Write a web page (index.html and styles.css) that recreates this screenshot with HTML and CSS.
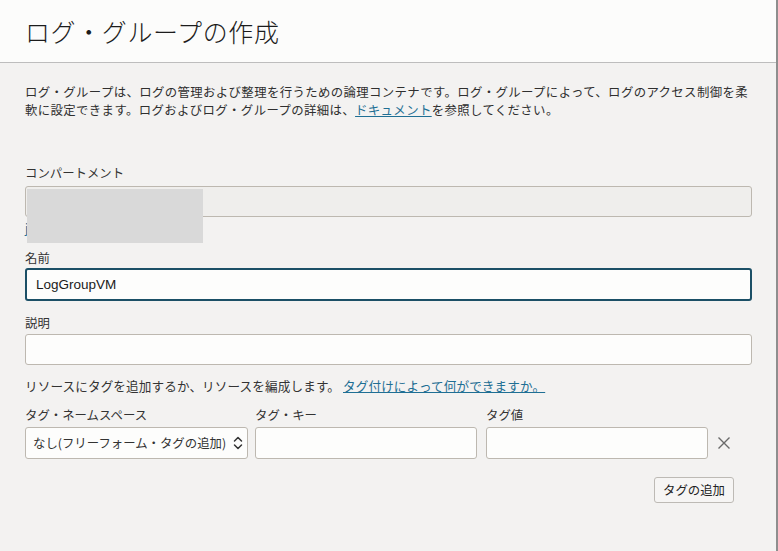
FILE: index.html
```html
<!DOCTYPE html>
<html lang="ja">
<head>
<meta charset="utf-8">
<link rel="stylesheet" href="styles.css">
</head>
<body>
<div class="page">
  <header class="header">
    <h1 class="title">ログ・グループの作成</h1>
  </header>
  <main class="content">
    <p class="intro">ログ・グループは、ログの管理および整理を行うための論理コンテナです。ログ・グループによって、ログのアクセス制御を柔軟に設定できます。ログおよびログ・グループの詳細は、<a class="link" href="#">ドキュメント</a>を参照してください。</p>

    <div class="field compartment">
      <label class="label">コンパートメント</label>
      <div class="select-box disabled"></div>
      <a class="sublink" href="#">j</a>
      <div class="redact"></div>
    </div>

    <div class="field name-field">
      <label class="label">名前</label>
      <div class="input focused">LogGroupVM</div>
    </div>

    <div class="field desc-field">
      <label class="label">説明</label>
      <div class="input"></div>
    </div>

    <p class="help">リソースにタグを追加するか、リソースを編成します。 <a class="link" href="#">タグ付けによって何ができますか。</a></p>

    <div class="tags">
      <div class="tag-col ns">
        <label class="label">タグ・ネームスペース</label>
        <div class="input select">
          <span>なし(フリーフォーム・タグの追加)</span>
          <svg class="chev" width="10" height="16" viewBox="0 0 10 16"><path d="M1.5 6 L5 2.5 L8.5 6 M1.5 10 L5 13.5 L8.5 10" fill="none" stroke="#333" stroke-width="1.5" stroke-linecap="round" stroke-linejoin="round"/></svg>
        </div>
      </div>
      <div class="tag-col key">
        <label class="label">タグ・キー</label>
        <div class="input"></div>
      </div>
      <div class="tag-col val">
        <label class="label">タグ値</label>
        <div class="input"></div>
      </div>
      <div class="remove">
        <svg width="14" height="14" viewBox="0 0 14 14"><path d="M1.5 1.5 L12.5 12.5 M12.5 1.5 L1.5 12.5" stroke="#6a6a6a" stroke-width="1.4" fill="none"/></svg>
      </div>
    </div>

    <div class="actions">
      <button class="btn">タグの追加</button>
    </div>
  </main>
</div>
</body>
</html>
```
FILE: styles.css
```css
* { box-sizing: border-box; }
html, body { margin: 0; padding: 0; }
body {
  background: #f3f2f1;
  font-family: "Noto Sans CJK JP", "Liberation Sans", sans-serif;
  color: #2e2e2e;
}
.page {
  width: 778px;
  height: 551px;
  border-right: 2px solid #8e8e8e;
  background: #f3f2f1;
}
.header {
  height: 63px;
  background: #fcfcfb;
  border-bottom: 1px solid #bdbdbd;
  display: flex;
  align-items: center;
  padding-left: 25px;
}
.title {
  margin: 0;
  font-size: 25px;
  font-weight: 300;
  color: #1c1c1c;
  line-height: 30px;
  letter-spacing: 0.6px;
}
.content {
  padding: 20px 24px 0 25px;
}
.intro {
  margin: 0;
  font-size: 12.4px;
  line-height: 18px;
  color: #2f2f2f;
  letter-spacing: 0.38px;
}
.link {
  color: #1f6f94;
  text-decoration: underline;
}
.label {
  display: block;
  font-size: 12.4px;
  line-height: 16px;
  color: #333;
}
.field { position: relative; }
.compartment { margin-top: 46px; }
.compartment .label { margin-bottom: 5px; }
.select-box {
  height: 31px;
  border: 1px solid #bdb8b0;
  border-radius: 3px;
  background: #efeeec;
}
.sublink {
  display: block;
  font-size: 12.4px;
  line-height: 16px;
  color: #1f6f94;
  margin-top: 3px;
  text-decoration: none;
}
.redact {
  position: absolute;
  left: 2px;
  top: 24px;
  width: 176px;
  height: 54px;
  background: #d9d9d9;
}
.name-field { margin-top: 14px; }
.name-field .label { margin-bottom: 2px; }
.input {
  height: 31px;
  border: 1px solid #bdb8b0;
  border-radius: 3px;
  background: #fdfdfc;
}
.input.focused {
  height: 33px;
  border: 2px solid #1b4f66;
  font-family: "Liberation Sans", Arial, sans-serif;
  font-size: 13.5px;
  color: #1a1a1a;
  display: flex;
  align-items: center;
  padding-left: 9px;
}
.desc-field { margin-top: 14px; }
.desc-field .label { margin-bottom: 3px; }
.help {
  margin: 13px 0 0;
  font-size: 12.6px;
  line-height: 16px;
  color: #333;
  letter-spacing: 0.12px;
}
.tags {
  display: flex;
  align-items: flex-end;
  margin-top: 13px;
}
.tag-col .label { margin-bottom: 4px; }
.tag-col .input { height: 32px; }
.ns { width: 223px; }
.key { width: 222px; margin-left: 7px; }
.val { width: 222px; margin-left: 9px; }
.input.select {
  display: flex;
  align-items: center;
  justify-content: space-between;
  padding: 0 4px 0 7px;
  font-size: 12.4px;
  color: #333;
}
.chev { display: block; }
.remove {
  width: 30px;
  height: 32px;
  display: flex;
  align-items: center;
  justify-content: center;
  margin-left: 1px;
}
.actions {
  display: flex;
  justify-content: flex-end;
  margin-top: 18px;
  padding-right: 18px;
}
.btn {
  height: 26px;
  padding: 0 8px;
  border: 1px solid #bdbab5;
  border-radius: 3px;
  background: #f6f5f4;
  font-family: "Noto Sans CJK JP", sans-serif;
  font-size: 12.4px;
  color: #222;
}
```
